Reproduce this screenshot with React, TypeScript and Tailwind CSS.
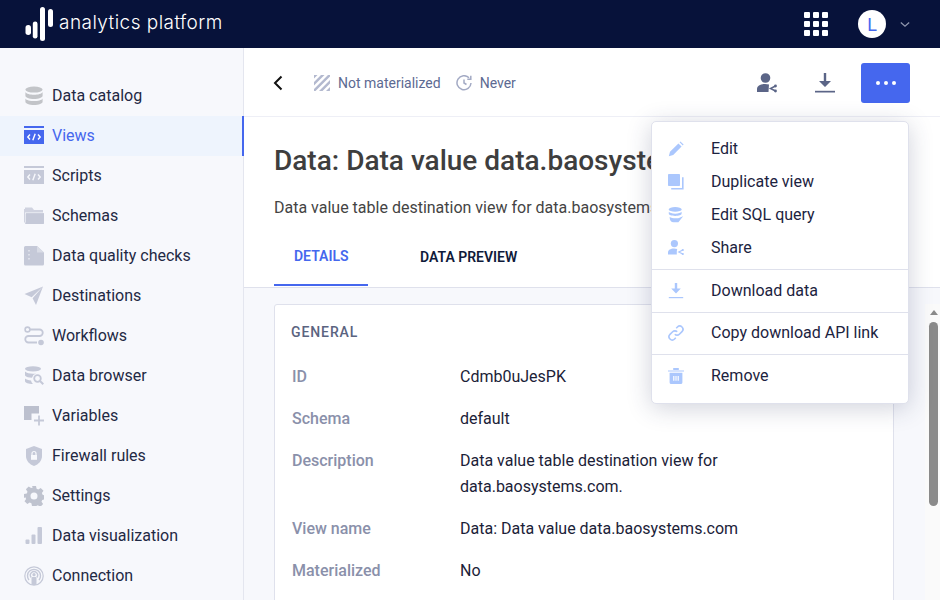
import type { ReactNode } from "react";

const G = "#c5c9d8";

function Svg({ children, className = "w-5 h-5", fill = G }: { children: ReactNode; className?: string; fill?: string }) {
  return (
    <svg viewBox="0 0 20 20" className={`${className} shrink-0`} fill={fill}>
      {children}
    </svg>
  );
}

function CodeIcon({ color, fg }: { color: string; fg: string }) {
  return (
    <Svg fill={color}>
      <rect x="0" y="0" width="20" height="2" />
      <rect x="0" y="4" width="20" height="14" />
      <path d="M6 8.500 3.800 11 6 13.500M14 8.500 16.200 11 14 13.500M11.200 7.800 8.800 14.200" fill="none" stroke={fg} strokeWidth="1.400" />
    </Svg>
  );
}

const navItems: { label: string; active?: boolean; icon: ReactNode }[] = [
  {
    label: "Data catalog",
    icon: (
      <Svg fill="#c2c4c8">
        <ellipse cx="10" cy="3.600" rx="8.600" ry="3" />
        <path d="M1.400 6c1 1.800 4.600 2.800 8.600 2.800S17.600 7.800 18.600 6v3.800c0 1.800-3.800 3.200-8.600 3.200s-8.600-1.400-8.600-3.200z" />
        <path d="M1.400 12.400c1 1.800 4.600 2.600 8.600 2.600s7.600-.8 8.600-2.600v3.400c0 1.900-3.800 3.200-8.600 3.200s-8.600-1.300-8.600-3.200z" />
      </Svg>
    ),
  },
  { label: "Views", active: true, icon: <CodeIcon color="#4567ee" fg="#ffffff" /> },
  { label: "Scripts", icon: <CodeIcon color={G} fg="#f7f8fc" /> },
  {
    label: "Schemas",
    icon: (
      <Svg>
        <path d="M1 1.500h7l2 2.500h9v2.500H1zM0 3h1v15h18a1 1 0 0 0 1-1V7H2.500A1 1 0 0 0 1.500 8v8.500H0z" opacity=".8" />
        <path d="M2 7.500h18V17a1 1 0 0 1-1 1H2z" />
      </Svg>
    ),
  },
  {
    label: "Data quality checks",
    icon: (
      <Svg>
        <path d="M1.500 0H13l7 6.500V18a1.500 1.500 0 0 1-1.500 1.500h-17A1.500 1.500 0 0 1 0 18V1.500A1.500 1.500 0 0 1 1.500 0z" />
        <path d="M5 4v1.500M5 8v1.500M5 12v1.500" stroke="#f7f8fc" strokeWidth="1" />
        <path d="M13 0v6.500h7" fill="#d9dce6" />
      </Svg>
    ),
  },
  {
    label: "Destinations",
    icon: (
      <Svg>
        <path d="M19 0.500 0.500 8l7.200 3.200L19 0.500zM19 0.500 8.600 12.200 12 19z" />
      </Svg>
    ),
  },
  {
    label: "Workflows",
    icon: (
      <Svg fill="none">
        <path d="M6 3.500h9.500a3.200 3.200 0 0 1 0 6.500H4.500a3.200 3.200 0 0 0 0 6.500H13" stroke={G} strokeWidth="1.800" />
        <circle cx="3.500" cy="3.500" r="2.400" stroke={G} strokeWidth="1.600" />
        <circle cx="17" cy="16.500" r="2.800" fill={G} />
      </Svg>
    ),
  },
  {
    label: "Data browser",
    icon: (
      <Svg>
        <ellipse cx="9" cy="2.800" rx="8" ry="2.600" />
        <path d="M1 5.500c1.500 1.500 4.500 2.200 8 2.200 1 0 2-.1 3-.2a6 6 0 0 0-4 4.300c-3 0-6-1-7-2.300zM1 12.500c1.200 1 3.400 1.700 6 1.900.3 1.500 1 2.800 2.200 3.600H9c-4.500 0-8-1.200-8-3z" />
        <circle cx="13.500" cy="12.500" r="3.300" fill="none" stroke={G} strokeWidth="1.800" />
        <path d="m16 15 3.300 3.300" stroke={G} strokeWidth="2" />
      </Svg>
    ),
  },
  {
    label: "Variables",
    icon: (
      <Svg>
        <path d="M0 0h15v7.500H7.500V14H0z" fill="#bcc0ce" />
        <path d="M15 9.500v10M10 14.500h10" stroke={G} strokeWidth="1.800" />
      </Svg>
    ),
  },
  {
    label: "Firewall rules",
    icon: (
      <Svg>
        <path d="M10 0l8 3v7c0 4.800-3.400 8.300-8 10-4.600-1.700-8-5.200-8-10V3z" />
        <path d="M7 9h6v4.800H7z" fill="#f7f8fc" />
        <path d="M8 9V7.500a2 2 0 0 1 4 0V9" fill="none" stroke="#f7f8fc" strokeWidth="1.200" />
      </Svg>
    ),
  },
  {
    label: "Settings",
    icon: (
      <Svg fill="#bfc3cf">
        <path
          fillRule="evenodd"
          d="M8 0h4l.6 2.800 1.700.7 2.400-1.600 2.800 2.800-1.600 2.400.7 1.700 2.400.6v4l-2.800.6-.7 1.700 1.600 2.400-2.800 2.800-2.400-1.600-1.700.7L12 20H8l-.6-2.800-1.700-.7-2.400 1.600-2.800-2.800 1.600-2.400-.7-1.700L0 12V8l2.800-.6.7-1.700-1.600-2.400 2.800-2.800 2.400 1.600 1.700-.7zM10 6.500a3.500 3.500 0 1 0 0 7 3.500 3.500 0 0 0 0-7z"
        />
      </Svg>
    ),
  },
  {
    label: "Data visualization",
    icon: (
      <Svg>
        <rect x="1.500" y="13.500" width="4" height="4.500" rx="1" />
        <rect x="7.500" y="8.500" width="4" height="9.500" rx="1" />
        <rect x="13.500" y="1" width="4.500" height="17" rx="1" />
      </Svg>
    ),
  },
  {
    label: "Connection",
    icon: (
      <Svg fill="none">
        <circle cx="10" cy="10" r="9.200" stroke={G} strokeWidth="1.200" />
        <path d="M5 14a6.500 6.500 0 1 1 10 0" stroke={G} strokeWidth="1.400" />
        <path d="M7.200 11.500a3.600 3.600 0 1 1 5.600 0" stroke={G} strokeWidth="1.400" />
        <circle cx="10" cy="8.700" r="1.600" fill={G} />
        <rect x="7.500" y="11" width="5" height="8" rx="1" fill={G} />
      </Svg>
    ),
  },
];

const B = "#abc7fd";

function MenuRow({ label, icon }: { label: string; icon: ReactNode }) {
  return (
    <div className="flex items-center h-[33px] pl-4">
      <span className="w-[43px] flex shrink-0">{icon}</span>
      <span>{label}</span>
    </div>
  );
}

function ActionsMenu() {
  return (
    <div className="absolute left-[651px] top-[121px] z-10 w-[258px] h-[283px] bg-white rounded-[5px] border border-[#dfe1ec] shadow-[0_4px_24px_rgba(40,50,90,0.22)] text-[16px] text-[#1c2340] pt-[10px]">
      <MenuRow
        label="Edit"
        icon={
          <Svg className="w-4 h-4" fill={B}>
            <path d="M1 19l1.500-5.500L13 3l4 4L6.500 17.500zM14.500 1.500l1-1 4 4-1 1z" />
          </Svg>
        }
      />
      <MenuRow
        label="Duplicate view"
        icon={
          <Svg className="w-4 h-4" fill={B}>
            <rect x="0" y="0" width="15" height="15" rx="1" />
            <path d="M17.500 4v13.500H4v2h15.500V4z" />
          </Svg>
        }
      />
      <MenuRow
        label="Edit SQL query"
        icon={
          <Svg className="w-4 h-4" fill={B}>
            <ellipse cx="9" cy="3" rx="8" ry="3" />
            <path d="M1 6c1 1.500 4 2.300 8 2.300S16 7.500 17 6v2.500c0 1.500-3.500 2.700-8 2.700S1 10 1 8.500z" />
            <path d="M2 12.500c3 2 10 2.300 13 .5l4-1.500-6 7.500H7c-3 0-5-2-5-6.500z" />
          </Svg>
        }
      />
      <MenuRow
        label="Share"
        icon={
          <Svg className="w-4 h-4" fill={B}>
            <circle cx="8" cy="4.500" r="4.500" />
            <path d="M0 18v-2.500C0 12.500 3 10.500 7.500 10.500c1.500 0 3 .2 4 .7L11 14v4z" />
            <path d="M18.500 12.500l-5 2.500 5 2.500" fill="none" stroke={B} strokeWidth="1.500" />
            <circle cx="18.500" cy="12.500" r="1.400" />
            <circle cx="18.500" cy="17.500" r="1.400" />
          </Svg>
        }
      />
      <div className="h-px bg-[#dfe1ec] mt-[5px]" />
      <div className="py-[4px] pb-[5px]">
        <MenuRow
          label="Download data"
          icon={
            <Svg className="w-4 h-4" fill={B}>
              <path d="M8.500 0h3v7H16l-6 6-6-6h4.500z" />
              <rect x="1" y="17.500" width="18" height="1.500" />
            </Svg>
          }
        />
      </div>
      <div className="h-px bg-[#dfe1ec]" />
      <div className="pt-[3px] pb-[5px]">
        <MenuRow
          label="Copy download API link"
          icon={
            <Svg className="w-4 h-4" fill="none">
              <path d="M8.500 11.500a4 4 0 0 0 5.700 0l3.300-3.300a4 4 0 0 0-5.700-5.700l-1.500 1.500" stroke={B} strokeWidth="2" />
              <path d="M11.500 8.500a4 4 0 0 0-5.700 0l-3.300 3.300a4 4 0 0 0 5.700 5.700l1.500-1.500" stroke={B} strokeWidth="2" />
            </Svg>
          }
        />
      </div>
      <div className="h-px bg-[#dfe1ec]" />
      <div className="py-[4px]">
        <MenuRow
          label="Remove"
          icon={
            <Svg className="w-4 h-4" fill={B}>
              <path d="M0 3h20v1.500H0zM6.500 0h7v2.500h-7z" />
              <path fillRule="evenodd" d="M2 6h16v12a2 2 0 0 1-2 2H4a2 2 0 0 1-2-2zM6.500 10v6H8v-6zM9.300 10v6h1.400v-6zM12 10v6h1.500v-6z" />
            </Svg>
          }
        />
      </div>
    </div>
  );
}

const rows: [string, ReactNode][] = [
  ["ID", "Cdmb0uJesPK"],
  ["Schema", "default"],
  [
    "Description",
    <>
      Data value table destination view for
      <br />
      data.baosystems.com.
    </>,
  ],
  ["View name", "Data: Data value data.baosystems.com"],
  ["Materialized", "No"],
];

export default function App() {
  return (
    <div className="relative h-screen w-full overflow-hidden flex flex-col bg-white font-['Roboto',sans-serif] text-[16px]">
      {/* top bar */}
      <header className="h-12 shrink-0 bg-[#07123a] flex items-center text-white">
        <svg viewBox="0 0 28 36" className="w-7 h-9 ml-[25px] mb-[-1px]" fill="#ffffff">
          <rect x="0.500" y="18" width="5.500" height="10" rx="2.700" />
          <rect x="7.800" y="14.500" width="4.700" height="17" rx="2.300" />
          <rect x="15" y="0" width="5" height="34" rx="2.500" />
          <rect x="23" y="2" width="5" height="18" rx="2.500" />
        </svg>
        <span className="ml-[6px] font-['Inter',sans-serif] font-light text-[19px] tracking-[0.45px] leading-none pb-[3px]">analytics platform</span>
        <div className="ml-auto grid grid-cols-3 gap-[3px] mr-[30px]">
          {Array.from({ length: 9 }).map((_, i) => (
            <span key={i} className="w-[6px] h-[6px] bg-white rounded-[1px]" />
          ))}
        </div>
        <div className="w-7 h-7 rounded-full bg-white text-[#4567ee] flex items-center justify-center text-[18px]">L</div>
        <svg viewBox="0 0 12 8" className="w-[10px] h-[7px] ml-[14px] mr-[30px]" fill="none" stroke="#8f96ad" strokeWidth="1.500">
          <path d="M1 1.500 6 6l5-4.500" />
        </svg>
      </header>

      <div className="flex flex-1 min-h-0">
        {/* sidebar */}
        <aside className="w-[244px] shrink-0 bg-[#f7f8fc] border-r border-[#e4e6ef] pt-7">
          {navItems.map((item) => (
            <div
              key={item.label}
              className={
                item.active
                  ? "h-10 flex items-center gap-2 pl-6 bg-[#eef4fd] text-[#4567ee] border-r-2 border-[#4567ee] -mr-px"
                  : "h-10 flex items-center gap-2 pl-6 text-[#1f2944]"
              }
            >
              {item.icon}
              <span>{item.label}</span>
            </div>
          ))}
        </aside>

        <main className="flex-1 min-w-0 flex flex-col">
          {/* toolbar */}
          <div className="h-[69px] shrink-0 flex items-center border-b border-[#eeeff6] pl-[29px] pr-[30px] pt-[2px] text-[14px] text-[#5c6a92]">
            <svg viewBox="0 0 10 16" className="w-[10px] h-4" fill="none" stroke="#111111" strokeWidth="2">
              <path d="M8.500 1.500 2 8l6.500 6.500" />
            </svg>
            <svg viewBox="0 0 16 16" className="w-4 h-4 ml-[31px]" fill="#b3b9cf">
              <path d="M0 0h3.500L0 3.500zM7 0h3.500L0 10.500V7zM14 0h2v1.500L1.500 16H0v-2zM16 5v3.500L8.500 16H5zM16 12v3.500l-.5.500H12z" />
            </svg>
            <span className="ml-2">Not materialized</span>
            <svg viewBox="0 0 16 16" className="w-4 h-4 ml-[15px]" fill="none" stroke="#a3aac4" strokeWidth="1.500">
              <path d="M13 2.800A7 7 0 1 0 15 8" />
              <path d="M14.800 0.800v3.500h-3.500" />
              <path d="M8 4.500V8l2.500 1.500" />
            </svg>
            <span className="ml-2">Never</span>
            <svg viewBox="0 0 20 20" className="w-5 h-5 ml-auto" fill="#5b6587">
              <circle cx="8.500" cy="5" r="4.800" />
              <path d="M0 19v-3c0-3 3.500-5 8-5 1.400 0 2.800.2 4 .6L11.500 19z" />
              <path d="M18.500 13 13.500 15.500l5 2.500" fill="none" stroke="#5b6587" strokeWidth="1.500" />
              <circle cx="18.500" cy="13" r="1.400" />
              <circle cx="18.500" cy="18" r="1.400" />
            </svg>
            <svg viewBox="0 0 20 20" className="w-5 h-5 ml-[38px]" fill="#5b6587">
              <path d="M8.800 0h2.400v8H16l-6 6-6-6h4.800z" />
              <rect y="17.800" width="20" height="1.700" />
            </svg>
            <button className="ml-[26px] w-[49px] h-10 rounded-[3px] bg-[#4567ee] flex items-center justify-center gap-[4px]">
              <span className="w-1 h-1 rounded-full bg-white" />
              <span className="w-1 h-1 rounded-full bg-white" />
              <span className="w-1 h-1 rounded-full bg-white" />
            </button>
          </div>

          {/* title block + tabs */}
          <div className="shrink-0 border-b border-[#dfe1ec] pl-[30px]">
            <h1 className="text-[28px] leading-[34px] font-medium text-[#3e3e3e] whitespace-nowrap pt-[27px]">
              Data: Data value data.baosystems.com
            </h1>
            <p className="mt-[18px] leading-[24px] text-[#444444] whitespace-nowrap">Data value table destination view for data.baosystems.com.</p>
            <div className="flex mt-[7px] h-[60px] text-[14px] font-semibold">
              <div className="w-[94px] h-[59px] pl-5 pt-[2px] flex items-center border-b-[2px] border-[#4567ee] text-[#4567ee]">DETAILS</div>
              <div className="ml-[52px] pt-[2px] flex items-center h-[59px] text-[#0f1a3a]">DATA PREVIEW</div>
            </div>
          </div>

          {/* body */}
          <div className="flex-1 min-h-0 flex bg-[#f7f8fc]">
            <div className="flex-1 min-w-0 pl-[30px] pr-[31px] pt-[16px]">
              <section className="bg-white border border-[#dfe1ec] rounded-[3px] pl-[16px] pt-[16px] pb-10">
                <h2 className="text-[14px] leading-[22px] font-medium tracking-[0.9px] text-[#5b6480]">GENERAL</h2>
                <dl className="mt-[21px] flex flex-col gap-[16px] leading-[26px] pl-px">
                  {rows.map(([k, v]) => (
                    <div key={k} className="flex">
                      <dt className="w-[168px] shrink-0 font-medium text-[#8a90aa]">{k}</dt>
                      <dd className="text-[#1b2238]">{v}</dd>
                    </div>
                  ))}
                </dl>
              </section>
            </div>
            {/* scrollbar */}
            <div className="w-[15px] shrink-0 mt-[16px] bg-[#fafafa] flex flex-col items-center pl-[2px] pt-[6px]">
              <span className="w-0 h-0 border-x-[4.500px] border-x-transparent border-b-[5px] border-b-[#8a8a8a]" />
              <span className="mt-[7px] w-[9px] h-[184px] rounded-full bg-[#8a8a8a]" />
            </div>
          </div>
        </main>
      </div>

      <ActionsMenu />
    </div>
  );
}
